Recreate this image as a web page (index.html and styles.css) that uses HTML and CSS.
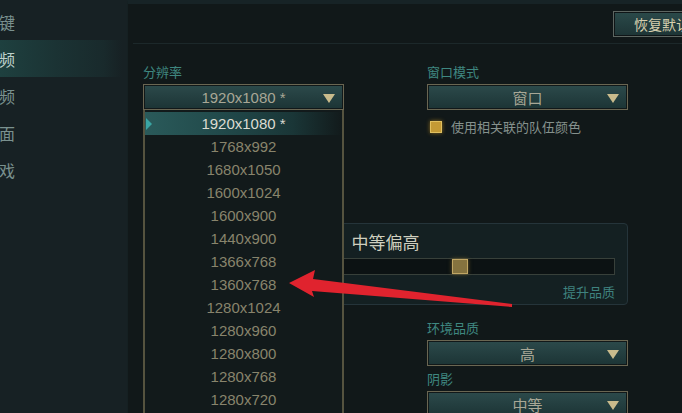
FILE: index.html
```html
<!DOCTYPE html>
<html lang="zh-CN">
<head>
    <meta charset="UTF-8">
    <meta name="viewport" content="width=device-width, initial-scale=1.0">
    <title>视频设置</title>
    <link rel="stylesheet" href="styles.css">
</head>
<body>
    <div class="app">
        <div class="sidebar">
            <div class="nav-item"><span class="nav-text">热键</span></div>
            <div class="nav-item active"><span class="nav-text">视频</span></div>
            <div class="nav-item"><span class="nav-text">音频</span></div>
            <div class="nav-item"><span class="nav-text">界面</span></div>
            <div class="nav-item"><span class="nav-text">游戏</span></div>
        </div>

        <div class="main">
            <div class="topbar">
                <button class="btn-reset">恢复默认设置</button>
            </div>

            <div class="content">
                <div class="form-row">
                    <div class="field">
                        <div class="label">分辨率</div>
                        <div class="select open">
                            <span>1920x1080 *</span>
                            <i class="caret"></i>
                        </div>
                        <ul class="options">
                            <li class="selected">1920x1080 *</li>
                            <li>1768x992</li>
                            <li>1680x1050</li>
                            <li>1600x1024</li>
                            <li>1600x900</li>
                            <li>1440x900</li>
                            <li>1366x768</li>
                            <li>1360x768</li>
                            <li>1280x1024</li>
                            <li>1280x960</li>
                            <li>1280x800</li>
                            <li>1280x768</li>
                            <li>1280x720</li>
                            <li>1024x768</li>
                        </ul>
                    </div>
                    <div class="field">
                        <div class="label">窗口模式</div>
                        <div class="select">
                            <span>窗口</span>
                            <i class="caret"></i>
                        </div>
                        <label class="check">
                            <span class="box"></span>
                            使用相关联的队伍颜色
                        </label>
                    </div>
                </div>

                <div class="quality">
                    <div class="quality-title">中等偏高</div>
                    <div class="track">
                        <div class="thumb"></div>
                    </div>
                    <div class="quality-hints">
                        <span>降低品质</span>
                        <span>提升品质</span>
                    </div>
                </div>

                <div class="form-row">
                    <div class="field"></div>
                    <div class="field">
                        <div class="label">环境品质</div>
                        <div class="select"><span>高</span><i class="caret"></i></div>
                    </div>
                </div>
                <div class="form-row">
                    <div class="field"></div>
                    <div class="field">
                        <div class="label">阴影</div>
                        <div class="select"><span>中等</span><i class="caret"></i></div>
                    </div>
                </div>
            </div>
        </div>
    </div>

    <!-- 标注箭头 -->
    <svg class="pointer" width="682" height="413" viewBox="0 0 682 413">
        <polygon points="289,283 315,270 313,279 512,304 512,307 312,291 314,297" fill="#e0232e"/>
    </svg>
</body>
</html>
```

FILE: styles.css
```css
* {
    margin: 0;
    padding: 0;
    box-sizing: border-box;
}

body {
    font-family: 'Liberation Sans', 'Noto Sans CJK SC', sans-serif;
    background: #111819;
    width: 682px;
    height: 413px;
    overflow: hidden;
    position: relative;
}

.app {
    display: flex;
    height: 413px;
}

/* 左侧菜单 */
.sidebar {
    width: 127px;
    flex-shrink: 0;
    background: #172124;
    padding-top: 3px;
}

.nav-item {
    height: 37px;
    display: flex;
    align-items: center;
    font-size: 16px;
    color: #7a918f;
}

.nav-text {
    margin-left: -17px;
}

.nav-item.active {
    color: #bcd0ca;
    background: linear-gradient(90deg, #1e403f 0%, #1b3334 45%, #192a2c 85%, #172124 100%);
    margin-right: 5px;
}

/* 主面板 */
.main {
    flex: 1;
    background: #111819;
    border-top: 4px solid #172326;
    border-left: 1px solid #152022;
}

.topbar {
    height: 40px;
    margin-left: 5px;
    border-bottom: 1px solid #1c282a;
    display: flex;
    justify-content: flex-end;
    padding-top: 7px;
}

.btn-reset {
    height: 26px;
    width: 110px;
    margin-right: -41px;
    padding-left: 20px;
    text-align: left;
    font-family: 'Noto Sans CJK SC', sans-serif;
    font-size: 14px;
    color: #d6cfae;
    background: linear-gradient(180deg, #2b4a4a 0%, #1d3435 100%);
    border: 1px solid #5d6661;
    box-shadow: inset 0 0 0 1px #0f1517;
}

.content {
    padding: 19px 0 0 15px;
}

.form-row {
    display: flex;
    gap: 83px;
}

.field {
    width: 201px;
    position: relative;
    margin-bottom: 4px;
}

.label {
    font-family: 'Noto Sans CJK SC', sans-serif;
    font-size: 13px;
    line-height: 18px;
    color: #3f8780;
    margin-bottom: 3px;
}

.select {
    height: 26px;
    position: relative;
    display: flex;
    align-items: center;
    justify-content: center;
    font-size: 15px;
    color: #a8a796;
    background: linear-gradient(180deg, #2c4a4b 0%, #1c3435 100%);
    border: 1px solid #6a6652;
    box-shadow: inset 0 0 0 1px #111819;
}

.select span {
    font-family: 'Liberation Sans', 'Noto Sans CJK SC', sans-serif;
}

.caret {
    position: absolute;
    right: 8px;
    top: 9px;
    width: 0;
    height: 0;
    border-left: 6px solid transparent;
    border-right: 6px solid transparent;
    border-top: 9px solid #c9bb8c;
}

/* 下拉列表 */
.options {
    position: absolute;
    top: 47px;
    left: 0;
    width: 201px;
    height: 330px;
    list-style: none;
    background: #121a1b;
    border-left: 2px solid #55533f;
    border-right: 2px solid #55533f;
    padding-top: 2px;
    z-index: 5;
}

.options li {
    height: 23px;
    line-height: 23px;
    text-align: center;
    font-size: 15px;
    color: #88846c;
    position: relative;
}

.options li.selected {
    color: #dcdcd2;
    background: linear-gradient(90deg, #2a5a5a 0%, #21494a 40%, #1a3637 75%, rgba(18, 26, 27, 0) 100%);
}

.options li.selected::before {
    content: '';
    position: absolute;
    left: 1px;
    top: 6px;
    border-top: 6px solid transparent;
    border-bottom: 6px solid transparent;
    border-left: 6px solid #3aa5a3;
}

.check {
    display: flex;
    align-items: center;
    gap: 9px;
    margin-top: 7px;
    font-family: 'Noto Sans CJK SC', sans-serif;
    font-size: 13px;
    color: #85918d;
}

.box {
    width: 12px;
    height: 12px;
    margin-left: 3px;
    background: #c49a35;
    border: 1px solid #e0c060;
    box-shadow: 0 0 4px #8a6a20;
}

/* 画质滑块 */
.quality {
    width: 485px;
    margin-top: 83px;
    margin-bottom: 14px;
    background: #142022;
    border: 1px solid #25343a;
    border-radius: 4px;
    padding: 7px 12px 3px;
}

.quality-title {
    text-align: center;
    font-family: 'Noto Sans CJK SC', sans-serif;
    font-size: 17px;
    line-height: 22px;
    color: #cfcfbf;
    margin-bottom: 5px;
}

.track {
    height: 17px;
    position: relative;
    background: #0c1213;
    border: 1px solid #38403a;
}

.thumb {
    position: absolute;
    left: 295px;
    top: 0;
    width: 16px;
    height: 15px;
    background: #85733f;
    border: 1px solid #c0a664;
    box-shadow: 0 0 4px #6a5a2a;
}

.quality-hints {
    display: flex;
    justify-content: space-between;
    margin-top: 8px;
    font-family: 'Noto Sans CJK SC', sans-serif;
    font-size: 13px;
    line-height: 18px;
    color: #3f827f;
}

.pointer {
    position: absolute;
    left: 0;
    top: 0;
    z-index: 10;
    pointer-events: none;
}
```
